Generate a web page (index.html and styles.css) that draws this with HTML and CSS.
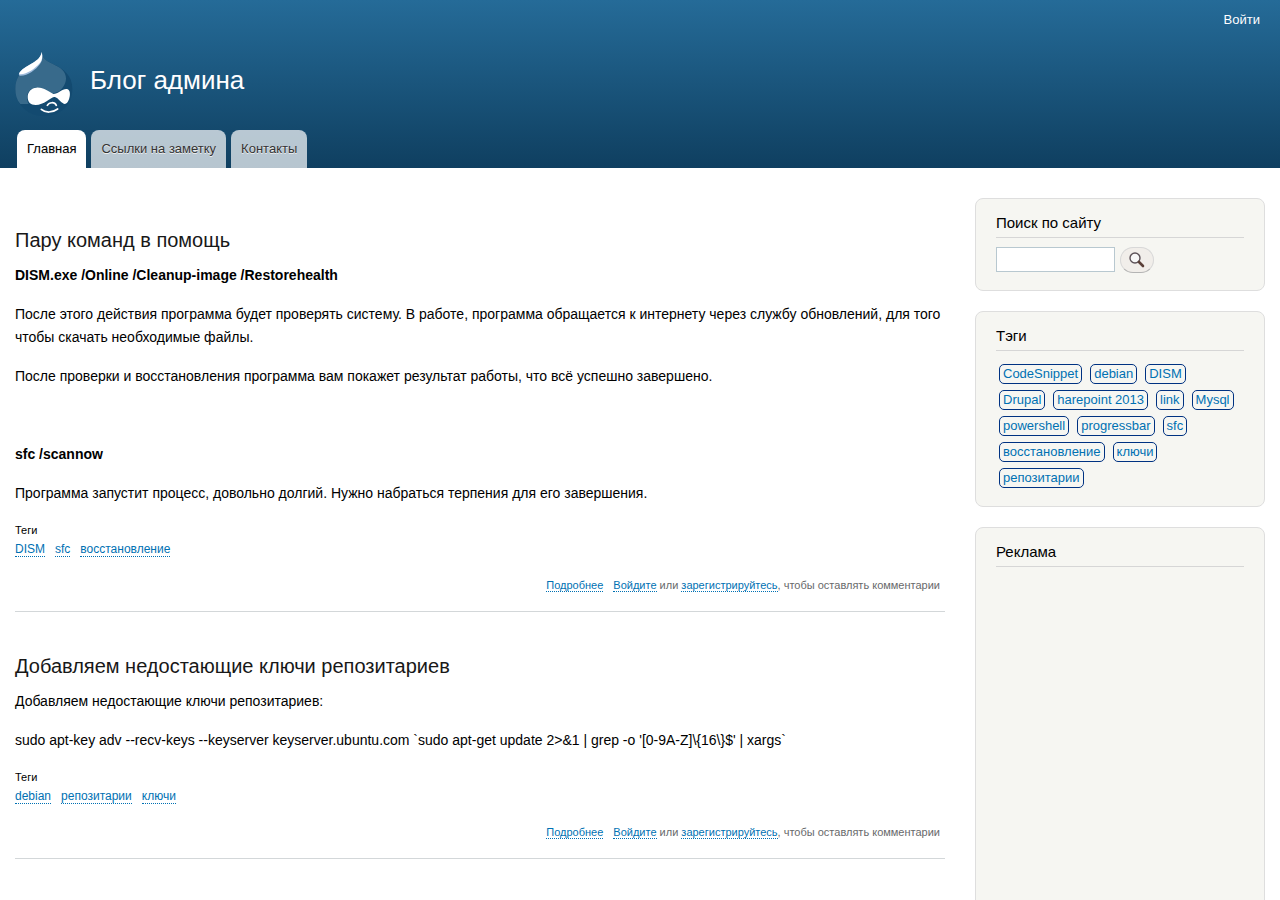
FILE: index.html
```
<!DOCTYPE html>
<html lang="ru">
<head>
	<meta charset="utf-8">
	<title>Блог админа</title>
	<link rel="stylesheet" href="styles.css">
</head>
<body>
	<header class="header">
		<nav class="user-menu"><a href="#">Войти</a></nav>
		<div class="branding">
			<a href="#" class="logo" aria-label="Главная">
				<svg width="60" height="68" viewBox="15 6 180 204">
					<path fill="#134a70" d="M95 12C99 32 104 36 130 49C162 63 187 84 187 122C187 173 149 204 102 204C53 204 16 169 16 122C16 92 32 70 54 55C75 41 92 36 95 12Z"/>
					<path fill="#386a8b" d="M95 12C99 32 104 36 130 49C154 60 168 72 168 91C168 108 158 121 148 130L126 138L108 128C96 116 70 115 58 128C50 138 48 152 56 168L31 168C20 155 16 139 16 122C16 92 32 70 54 55C75 41 92 36 95 12Z"/>
					<path fill="#9ebbdc" d="M95 12C99 24 98 38 90 48C78 65 53 84 30 83C25 82 26 78 29 73C49 49 91 43 95 12Z"/>
					<path fill="#fff" d="M95 12C98 25 97 37 89 46C76 61 51 79 32 79C26 79 27 76 30 72C49 49 91 43 95 12Z"/>
					<path fill="#fff" d="M79 119C101 117 116 132 130 138C144 138 158 121 171 123C182 125 181 143 177 154C172 168 165 171 158 165C148 158 140 145 132 147C122 149 101 171 77 171C61 171 53 162 53 147C53 131 64 120 79 119Z"/>
					<path fill="none" stroke="#fff" stroke-width="5" stroke-linecap="round" d="M112 172C118 162 134 161 139 172M94 184C106 195 127 195 143 183"/>
				</svg>
			</a>
			<a href="#" class="site-name">Блог админа</a>
		</div>
		<nav class="main-menu">
			<a href="#" class="active">Главная</a>
			<a href="#">Ссылки на заметку</a>
			<a href="#">Контакты</a>
		</nav>
	</header>

	<div class="wrapper">
		<main class="content">
			<article class="node">
				<h2><a href="#">Пару команд в помощь</a></h2>
				<p><strong>DISM.exe /Online /Cleanup-image /Restorehealth</strong></p>
				<p>После этого действия программа будет проверять систему. В работе, программа обращается к интернету через службу обновлений, для того чтобы скачать необходимые файлы.</p>
				<p>После проверки и восстановления программа вам покажет результат работы, что всё успешно завершено.</p>
				<p>&nbsp;</p>
				<p><strong>sfc /scannow</strong></p>
				<p>Программа запустит процесс, довольно долгий. Нужно набраться терпения для его завершения.</p>
				<div class="tags">
					<h3>Теги</h3>
					<ul>
						<li><a href="#">DISM</a></li>
						<li><a href="#">sfc</a></li>
						<li><a href="#">восстановление</a></li>
					</ul>
				</div>
				<ul class="links">
					<li><a href="#">Подробнее</a></li>
					<li><a href="#">Войдите</a> или <a href="#">зарегистрируйтесь</a>, чтобы оставлять комментарии</li>
				</ul>
			</article>

			<article class="node">
				<h2><a href="#">Добавляем недостающие ключи репозитариев</a></h2>
				<p>Добавляем недостающие ключи репозитариев:</p>
				<p>sudo apt-key adv --recv-keys --keyserver keyserver.ubuntu.com `sudo apt-get update 2&gt;&amp;1 | grep -o '[0-9A-Z]\{16\}$' | xargs`</p>
				<div class="tags">
					<h3>Теги</h3>
					<ul>
						<li><a href="#">debian</a></li>
						<li><a href="#">репозитарии</a></li>
						<li><a href="#">ключи</a></li>
					</ul>
				</div>
				<ul class="links">
					<li><a href="#">Подробнее</a></li>
					<li><a href="#">Войдите</a> или <a href="#">зарегистрируйтесь</a>, чтобы оставлять комментарии</li>
				</ul>
			</article>
		</main>

		<aside class="sidebar">
			<section class="block">
				<h2 id="search-title">Поиск по сайту</h2>
				<form class="search">
					<input type="search" aria-labelledby="search-title">
					<button type="submit" aria-label="Поиск">
						<svg width="16" height="16" viewBox="0 0 16 16">
							<circle cx="6" cy="6" r="5" fill="#f8f8f8" stroke="#5c5258" stroke-width="1.4"/>
							<path d="M10 10L14 14" stroke="#5b4038" stroke-width="2.6" stroke-linecap="round"/>
						</svg>
					</button>
				</form>
			</section>

			<section class="block">
				<h2>Тэги</h2>
				<ul class="cloud">
					<li><a href="#">CodeSnippet</a></li>
					<li><a href="#">debian</a></li>
					<li><a href="#">DISM</a></li>
					<li><a href="#">Drupal</a></li>
					<li><a href="#">harepoint 2013</a></li>
					<li><a href="#">link</a></li>
					<li><a href="#">Mysql</a></li>
					<li><a href="#">powershell</a></li>
					<li><a href="#">progressbar</a></li>
					<li><a href="#">sfc</a></li>
					<li><a href="#">восстановление</a></li>
					<li><a href="#">ключи</a></li>
					<li><a href="#">репозитарии</a></li>
				</ul>
			</section>

			<section class="block">
				<h2>Реклама</h2>
				<div class="banner"></div>
			</section>
		</aside>
	</div>
</body>
</html>
```
FILE: styles.css
```
body,h2,h3,p,ul{margin: 0;padding: 0;}
*{box-sizing: border-box;}
ul{list-style-type: none;}
body{
	background: #fff;
	color: #000;
	font: 14px/23px "Liberation Sans", Arial, sans-serif;
}
a{color: #0071b3;text-decoration: none;}

/* header */
.header{
	background: #0f3f60 linear-gradient(#256b98, #0f3f60);
	padding: 0 15px;
}
.user-menu{
	padding: 10px 5px 0;
	text-align: right;
	font-size: 13px;
	line-height: 20px;
}
.user-menu a{color: #fffeff;}
.branding{
	display: flex;
	align-items: center;
	gap: 15px;
	padding: 20px 0 12px;
}
.logo svg{display: block;}
.site-name{
	color: #fffeff;
	font-size: 26px;
	line-height: 30px;
	padding-bottom: 8px;
}
.main-menu{
	display: flex;
	gap: 5px;
	padding: 0 2px;
	font-size: 13px;
	line-height: 38px;
}
.main-menu a{
	padding: 0 10px;
	color: #333;
	background: rgba(255,255,255,0.7);
	text-shadow: 0 1px #eee;
	border-radius: 8px 8px 0 0;
}
.main-menu a.active{
	color: #000;
	background: #fff;
}

/* columns */
.wrapper{display: flex;align-items: flex-start;}
.content{width: 75%;padding: 18px 15px;}
.sidebar{width: 25%;padding: 30px 15px;}

/* posts */
.node{
	padding: 41px 0 16px;
	border-bottom: 1px solid #d3d7d9;
}
.node h2{
	font-size: 20px;
	line-height: 26px;
	font-weight: normal;
	margin-bottom: 11px;
}
.node h2 a{color: #181818;}
.node p{margin-bottom: 16px;}
.tags{font-size: 12px;line-height: 19px;}
.tags h3{font-size: 11px;font-weight: normal;}
.tags ul{display: flex;gap: 10px;}
.tags a,
.links a{border-bottom: 1px dotted;}
.links{
	display: flex;
	justify-content: flex-end;
	gap: 10px;
	padding: 16px 5px 0;
	color: #68696b;
	font-size: 11px;
	line-height: 20px;
}

/* sidebar */
.block{
	padding: 14px 20px 15px;
	margin-bottom: 20px;
	background: #f6f6f2;
	border: 1px solid #dedede;
	border-radius: 8px;
}
.block h2{
	font-size: 15px;
	line-height: 20px;
	font-weight: normal;
	padding-bottom: 4px;
	margin-bottom: 9px;
	border-bottom: 1px solid #d6d6d6;
}
.search{display: flex;gap: 5px;padding-bottom: 2px;}
.search input{
	width: 119px;
	height: 25px;
	margin: 0;
	padding: 2px 4px;
	border: 1px solid #b8c8d0;
	background: #fff;
	appearance: none;
}
.search button{
	display: flex;
	width: 34px;
	height: 26px;
	padding: 4px 8px;
	border: 1px solid #d8d8d8;
	border-bottom-color: #b4b4b4;
	border-radius: 13px;
	background: #f1eeea;
}
.cloud{
	display: flex;
	flex-wrap: wrap;
	gap: 6px 8px;
	padding: 4px 6px 3px 3px;
	font-size: 13px;
	line-height: 18px;
}
.cloud a{
	display: block;
	padding: 0 3px;
	border: 1px solid #003282;
	border-radius: 5px;
}
.banner{min-height: 600px;}
```
